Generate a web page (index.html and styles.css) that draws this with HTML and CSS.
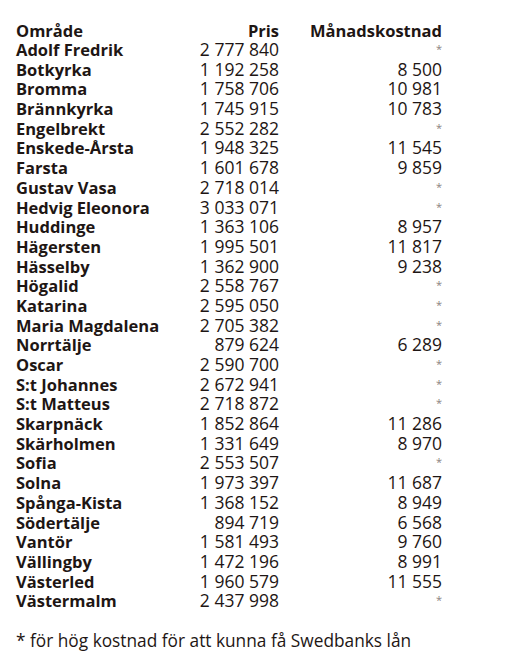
FILE: index.html
```html
<!DOCTYPE html>
<html lang="sv">
<head>
<meta charset="utf-8">
<link rel="stylesheet" href="styles.css">
</head>
<body>
<div class="page">
  <div class="table">
    <div class="row head"><span class="name">Område</span><span class="num">Pris</span><span class="num">Månadskostnad</span></div>
    <div class="row"><span class="name">Adolf Fredrik</span><span class="num">2 777 840</span><span class="num"><span class="ast">*</span></span></div>
    <div class="row"><span class="name">Botkyrka</span><span class="num">1 192 258</span><span class="num">8 500</span></div>
    <div class="row"><span class="name">Bromma</span><span class="num">1 758 706</span><span class="num">10 981</span></div>
    <div class="row"><span class="name">Brännkyrka</span><span class="num">1 745 915</span><span class="num">10 783</span></div>
    <div class="row"><span class="name">Engelbrekt</span><span class="num">2 552 282</span><span class="num"><span class="ast">*</span></span></div>
    <div class="row"><span class="name">Enskede-Årsta</span><span class="num">1 948 325</span><span class="num">11 545</span></div>
    <div class="row"><span class="name">Farsta</span><span class="num">1 601 678</span><span class="num">9 859</span></div>
    <div class="row"><span class="name">Gustav Vasa</span><span class="num">2 718 014</span><span class="num"><span class="ast">*</span></span></div>
    <div class="row"><span class="name">Hedvig Eleonora</span><span class="num">3 033 071</span><span class="num"><span class="ast">*</span></span></div>
    <div class="row"><span class="name">Huddinge</span><span class="num">1 363 106</span><span class="num">8 957</span></div>
    <div class="row"><span class="name">Hägersten</span><span class="num">1 995 501</span><span class="num">11 817</span></div>
    <div class="row"><span class="name">Hässelby</span><span class="num">1 362 900</span><span class="num">9 238</span></div>
    <div class="row"><span class="name">Högalid</span><span class="num">2 558 767</span><span class="num"><span class="ast">*</span></span></div>
    <div class="row"><span class="name">Katarina</span><span class="num">2 595 050</span><span class="num"><span class="ast">*</span></span></div>
    <div class="row"><span class="name">Maria Magdalena</span><span class="num">2 705 382</span><span class="num"><span class="ast">*</span></span></div>
    <div class="row"><span class="name">Norrtälje</span><span class="num">879 624</span><span class="num">6 289</span></div>
    <div class="row"><span class="name">Oscar</span><span class="num">2 590 700</span><span class="num"><span class="ast">*</span></span></div>
    <div class="row"><span class="name">S:t Johannes</span><span class="num">2 672 941</span><span class="num"><span class="ast">*</span></span></div>
    <div class="row"><span class="name">S:t Matteus</span><span class="num">2 718 872</span><span class="num"><span class="ast">*</span></span></div>
    <div class="row"><span class="name">Skarpnäck</span><span class="num">1 852 864</span><span class="num">11 286</span></div>
    <div class="row"><span class="name">Skärholmen</span><span class="num">1 331 649</span><span class="num">8 970</span></div>
    <div class="row"><span class="name">Sofia</span><span class="num">2 553 507</span><span class="num"><span class="ast">*</span></span></div>
    <div class="row"><span class="name">Solna</span><span class="num">1 973 397</span><span class="num">11 687</span></div>
    <div class="row"><span class="name">Spånga-Kista</span><span class="num">1 368 152</span><span class="num">8 949</span></div>
    <div class="row"><span class="name">Södertälje</span><span class="num">894 719</span><span class="num">6 568</span></div>
    <div class="row"><span class="name">Vantör</span><span class="num">1 581 493</span><span class="num">9 760</span></div>
    <div class="row"><span class="name">Vällingby</span><span class="num">1 472 196</span><span class="num">8 991</span></div>
    <div class="row"><span class="name">Västerled</span><span class="num">1 960 579</span><span class="num">11 555</span></div>
    <div class="row"><span class="name">Västermalm</span><span class="num">2 437 998</span><span class="num"><span class="ast">*</span></span></div>
  </div>
  <p class="note">* för hög kostnad för att kunna få Swedbanks lån</p>
</div>
</body>
</html>
```

FILE: styles.css
```css
html, body {
  margin: 0;
  padding: 0;
  background: #ffffff;
}
.page {
  padding: 21px 0 0 16px;
  color: #1e1614;
  font-family: "Open Sans", "DejaVu Sans", sans-serif;
}
.table {
  display: block;
}
.row {
  display: grid;
  grid-template-columns: 180px 83px 163px;
  height: 19.7px;
  line-height: 19.7px;
  font-size: 16.5px;
}
.head {
  height: 19px;
}
.name {
  font-weight: 700;
}
.num {
  text-align: right;
  font-weight: 400;
  font-size: 17.5px;
}
.head .num {
  font-weight: 700;
  font-size: 16.5px;
}
.ast {
  font-size: 11px;
  line-height: 11px;
  color: #8a8280;
  vertical-align: 3px;
}
.note {
  margin: 20px 0 0 0;
  font-size: 17.3px;
  line-height: 20px;
  font-weight: 400;
}
```
